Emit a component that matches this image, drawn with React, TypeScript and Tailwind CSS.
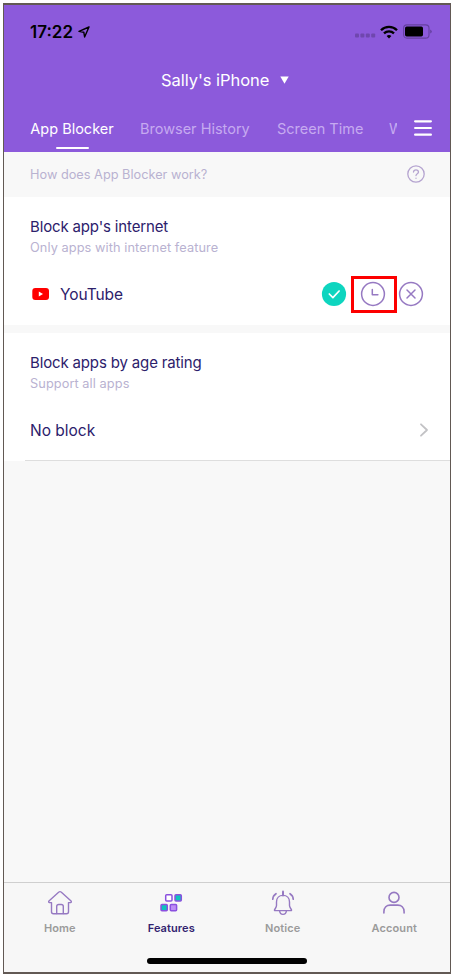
import React from "react";

const line = { fill: "none", strokeLinecap: "round", strokeLinejoin: "round" } as const;

function StatusBar() {
  return (
    <div className="flex h-[54px] items-center pl-[26px] pr-[18px] text-black">
      <span className="text-[17px] font-semibold leading-[20px]">17:22</span>
      <svg className="ml-[5px]" width="12" height="12" viewBox="0 0 12 12" {...line} stroke="currentColor" strokeWidth="1.4">
        <path d="M11 1 1 5.4l4.8.8.8 4.8Z" />
      </svg>
      <svg className="ml-auto mt-[7px]" width="21" height="5" viewBox="0 0 21 5" fill="#6f47ae">
        <rect x="0" y="0.5" width="4" height="4" rx="1" />
        <rect x="5.4" y="0.5" width="4" height="4" rx="1" />
        <rect x="10.8" y="0.5" width="4" height="4" rx="1" />
        <rect x="16.2" y="0.5" width="4" height="4" rx="1" />
      </svg>
      <svg className="mb-[1px] ml-[4px]" width="18" height="14" viewBox="0 0 18 14" fill="none" stroke="#000" strokeWidth="2.3">
        <path d="M1 5.3C5.4.8 12.6.8 17 5.3" />
        <path d="M4 8.4c2.8-2.7 7.2-2.7 10 0" />
        <path d="M9 13.4 6.6 11q2.4-1.8 4.8 0Z" fill="#000" stroke="none" />
      </svg>
      <svg className="mb-[1px] ml-[5px]" width="29" height="15" viewBox="0 0 29 15">
        <rect x="0.6" y="0.9" width="25.4" height="13.2" rx="3.4" fill="none" stroke="#6540a0" strokeWidth="1.1" />
        <rect x="2" y="2.6" width="18" height="9.8" rx="1.7" fill="#000" />
        <path d="M27.2 5.4q1.6.8 1.6 2.1t-1.6 2.1Z" fill="#6540a0" />
      </svg>
    </div>
  );
}

function Header() {
  return (
    <header className="h-[147px] bg-[#8c5adb] text-white">
      <StatusBar />
      <div className="flex h-[43px] items-center pl-[157px]">
        <span className="mb-[1px] text-[16.5px] leading-[22px] tracking-[-0.05px]">Sally's iPhone</span>
        <svg className="mb-[1px] ml-[11px]" width="9" height="8" viewBox="0 0 9 8" fill="currentColor">
          <path d="M0.3 0.5h8.4L4.5 7.8Z" />
        </svg>
      </div>
      <div className="flex h-[50px] pl-[26px] pr-[18px] text-[14.5px] leading-[20px] text-[#c6aaf0]">
        <div className="flex w-[84px] flex-col items-center pt-[17px] text-white">
          <span className="whitespace-nowrap">App Blocker</span>
          <span className="mt-[8px] h-[2px] w-[33px] rounded-full bg-white" />
        </div>
        <span className="ml-[26px] w-[111px] whitespace-nowrap pt-[17px]">Browser History</span>
        <span className="ml-[26px] w-[87px] whitespace-nowrap pt-[17px]">Screen Time</span>
        <span className="ml-[25px] w-[8px] overflow-hidden whitespace-nowrap pt-[17px]">W</span>
        <svg className="ml-auto mt-[17px]" width="18" height="18" viewBox="0 0 18 18" stroke="#fff" strokeWidth="2.2" strokeLinecap="round">
          <path d="M1.1 2.3h15.8M1.1 9h15.8M1.1 15.7h15.8" />
        </svg>
      </div>
    </header>
  );
}

function BlockActions() {
  return (
    <div className="ml-auto flex items-center">
      <svg className="mb-[1px]" width="26" height="26" viewBox="0 0 26 26" {...line}>
        <circle cx="13" cy="13" r="12.1" fill="#0ed5bf" />
        <path d="m8.3 13 3.6 3.6 6.2-6.6" stroke="#fff" strokeWidth="1.7" />
      </svg>
      <div className="ml-[4px] flex h-[37px] w-[46px] items-center justify-center border-3 border-[#fd0000]">
        <svg className="-ml-[2px] mb-[1px]" width="26" height="26" viewBox="0 0 26 26" {...line} stroke="#9679c2" strokeWidth="1.5">
          <circle cx="13" cy="13" r="11.4" />
          <path d="M12.3 8.5v5.3h5.6" />
        </svg>
      </div>
      <svg className="mb-[1px] ml-[1px]" width="26" height="26" viewBox="0 0 26 26" {...line} stroke="#9679c2" strokeWidth="1.5">
        <circle cx="13" cy="13" r="11.4" />
        <path d="m9 9 8 8m0-8-8 8" />
      </svg>
    </div>
  );
}

function BlockInternet() {
  return (
    <section className="flex h-[128px] flex-col bg-white pl-[26px] pr-[26px] pt-[18px]">
      <h2 className="text-[15px] leading-[23px] tracking-[-0.15px]">Block app's internet</h2>
      <p className="text-[12.75px] leading-[19px] tracking-[0.08px] text-[#b9b2d1]">Only apps with internet feature</p>
      <div className="mt-[19px] flex h-[37px] items-center">
        <svg className="mb-[1px] ml-[2px]" width="17" height="12" viewBox="0 0 17 12">
          <rect x="0.3" width="16.7" height="12" rx="3" fill="#f00" />
          <path d="m6.8 3.6 4.2 2.4-4.2 2.4Z" fill="#fff" />
        </svg>
        <span className="ml-[11px] text-[15.5px] leading-[22px] tracking-[-0.1px]">YouTube</span>
        <BlockActions />
      </div>
    </section>
  );
}

function BlockByAge() {
  return (
    <section className="mt-[8px] h-[128px] bg-white pt-[18px]">
      <div className="pl-[26px]">
        <h2 className="text-[15px] leading-[23px] tracking-[-0.15px]">Block apps by age rating</h2>
        <p className="text-[12.75px] leading-[19px] tracking-[0.08px] text-[#b9b2d1]">Support all apps</p>
      </div>
      <div className="ml-[21px] mt-[8px] flex h-[60px] items-center border-b border-[#dedede] pl-[5px] pr-[21px]">
        <span className="text-[15.5px] leading-[22px]">No block</span>
        <svg className="mb-[1px] ml-auto" width="10" height="14" viewBox="0 0 10 14" {...line} stroke="#c2c2c5" strokeWidth="1.8">
          <path d="m2 1.3 6 5.7-6 5.7" />
        </svg>
      </div>
    </section>
  );
}

function HomeIcon() {
  return (
    <svg width="26" height="26" viewBox="0 0 26 26" {...line} stroke="#9679c2" strokeWidth="1.4">
      <path d="M13 1.6q.6 0 1.1.5l9.7 8.6q1.2 1.3-.2 1.9H21.5v9.2q0 2-2 2h-13q-2 0-2-2v-9.2H2.4q-1.4-.6-.2-1.9l9.7-8.6q.5-.5 1.1-.5Z" />
      <path d="M9.7 23.5v-7q0-2 2-2h2.6q2 0 2 2v7" />
    </svg>
  );
}

function FeaturesIcon() {
  return (
    <svg width="26" height="26" viewBox="0 0 26 26" stroke="#8b50df" strokeWidth="1.5">
      <rect x="7.7" y="4.7" width="6.3" height="6.3" rx="1" fill="#fff" />
      <rect x="17" y="4.7" width="6.3" height="6.3" rx="1" fill="#0dc4bd" />
      <rect x="3" y="14.4" width="6.3" height="6.3" rx="1" fill="#0dc4bd" />
      <rect x="12.3" y="14.4" width="6.3" height="6.3" rx="1" fill="#bd8df5" />
    </svg>
  );
}

function NoticeIcon() {
  return (
    <svg width="26" height="26" viewBox="0 0 26 26" {...line} stroke="#9679c2" strokeWidth="1.4">
      <path d="M13 1.5v4" strokeWidth="2" />
      <path d="M13 5.4c-3.9 0-6.5 2.7-6.5 6.5v3.7c0 1.7-1.2 2.7-2 4.3q-.2.7.6.7h15.8q.8 0 .6-.7c-.8-1.6-2-2.6-2-4.3v-3.7c0-3.8-2.6-6.5-6.5-6.5Z" />
      <path d="M9.6 20.8q.3 3.6 3.4 3.6t3.4-3.6" />
      <path d="M6 3.7Q3 5.6 2.8 9.2M20 3.7q3 1.9 3.2 5.5" strokeWidth="1.7" />
    </svg>
  );
}

function AccountIcon() {
  return (
    <svg width="26" height="26" viewBox="0 0 26 26" {...line} stroke="#9679c2" strokeWidth="1.6">
      <circle cx="13" cy="7.4" r="5" />
      <path d="M2.9 23v-1.3c0-4.3 2.8-6.6 6.3-6.6h7.6c3.5 0 6.3 2.3 6.3 6.6V23" />
    </svg>
  );
}

const tabs = [
  { label: "Home", Icon: HomeIcon, active: false },
  { label: "Features", Icon: FeaturesIcon, active: true },
  { label: "Notice", Icon: NoticeIcon, active: false },
  { label: "Account", Icon: AccountIcon, active: false },
];

function TabBar() {
  return (
    <nav className="mt-auto flex h-[90px] flex-col border-t border-[#cfcfcf] bg-[#f7f7f7]">
      <div className="grid grid-cols-4">
        {tabs.map(({ label, Icon, active }) => (
          <div key={label} className="flex flex-col items-center pt-[7px]">
            <Icon />
            <span className={`mt-[4px] text-[11px] font-semibold leading-[16px] ${active ? "tracking-[0.1px] text-[#32236f]" : "tracking-[0.1px] text-[#9b9b9b]"}`}>
              {label}
            </span>
          </div>
        ))}
      </div>
      <div className="mx-auto mb-[8px] mt-auto h-[6px] w-[160px] rounded-full bg-black" />
    </nav>
  );
}

export default function App() {
  return (
    <div className="h-[976px] w-[454px] bg-white p-[3px] pb-[2px] font-['Inter','Liberation_Sans',sans-serif]">
      <div className="flex h-[971px] w-[448px] flex-col border-x border-y-2 border-[#625954] bg-[#f8f8f8] text-[#2c206b]">
        <Header />
        <div className="flex h-[45px] items-center justify-between pl-[26px] pr-[25px] text-[#b9b2d1]">
          <span className="mt-[1px] text-[12.75px] leading-[18px]">How does App Blocker work?</span>
          <svg className="mb-[1px]" width="18" height="18" viewBox="0 0 18 18" {...line} stroke="#b5a4d0" strokeWidth="1.3">
            <circle cx="9" cy="9" r="8.2" />
            <path d="M6.5 7Q6.7 4.9 9 4.9T11.5 7C11.5 8.7 9 8.7 9 10.5M9 13.2v.1" />
          </svg>
        </div>
        <BlockInternet />
        <BlockByAge />
        <TabBar />
      </div>
    </div>
  );
}
